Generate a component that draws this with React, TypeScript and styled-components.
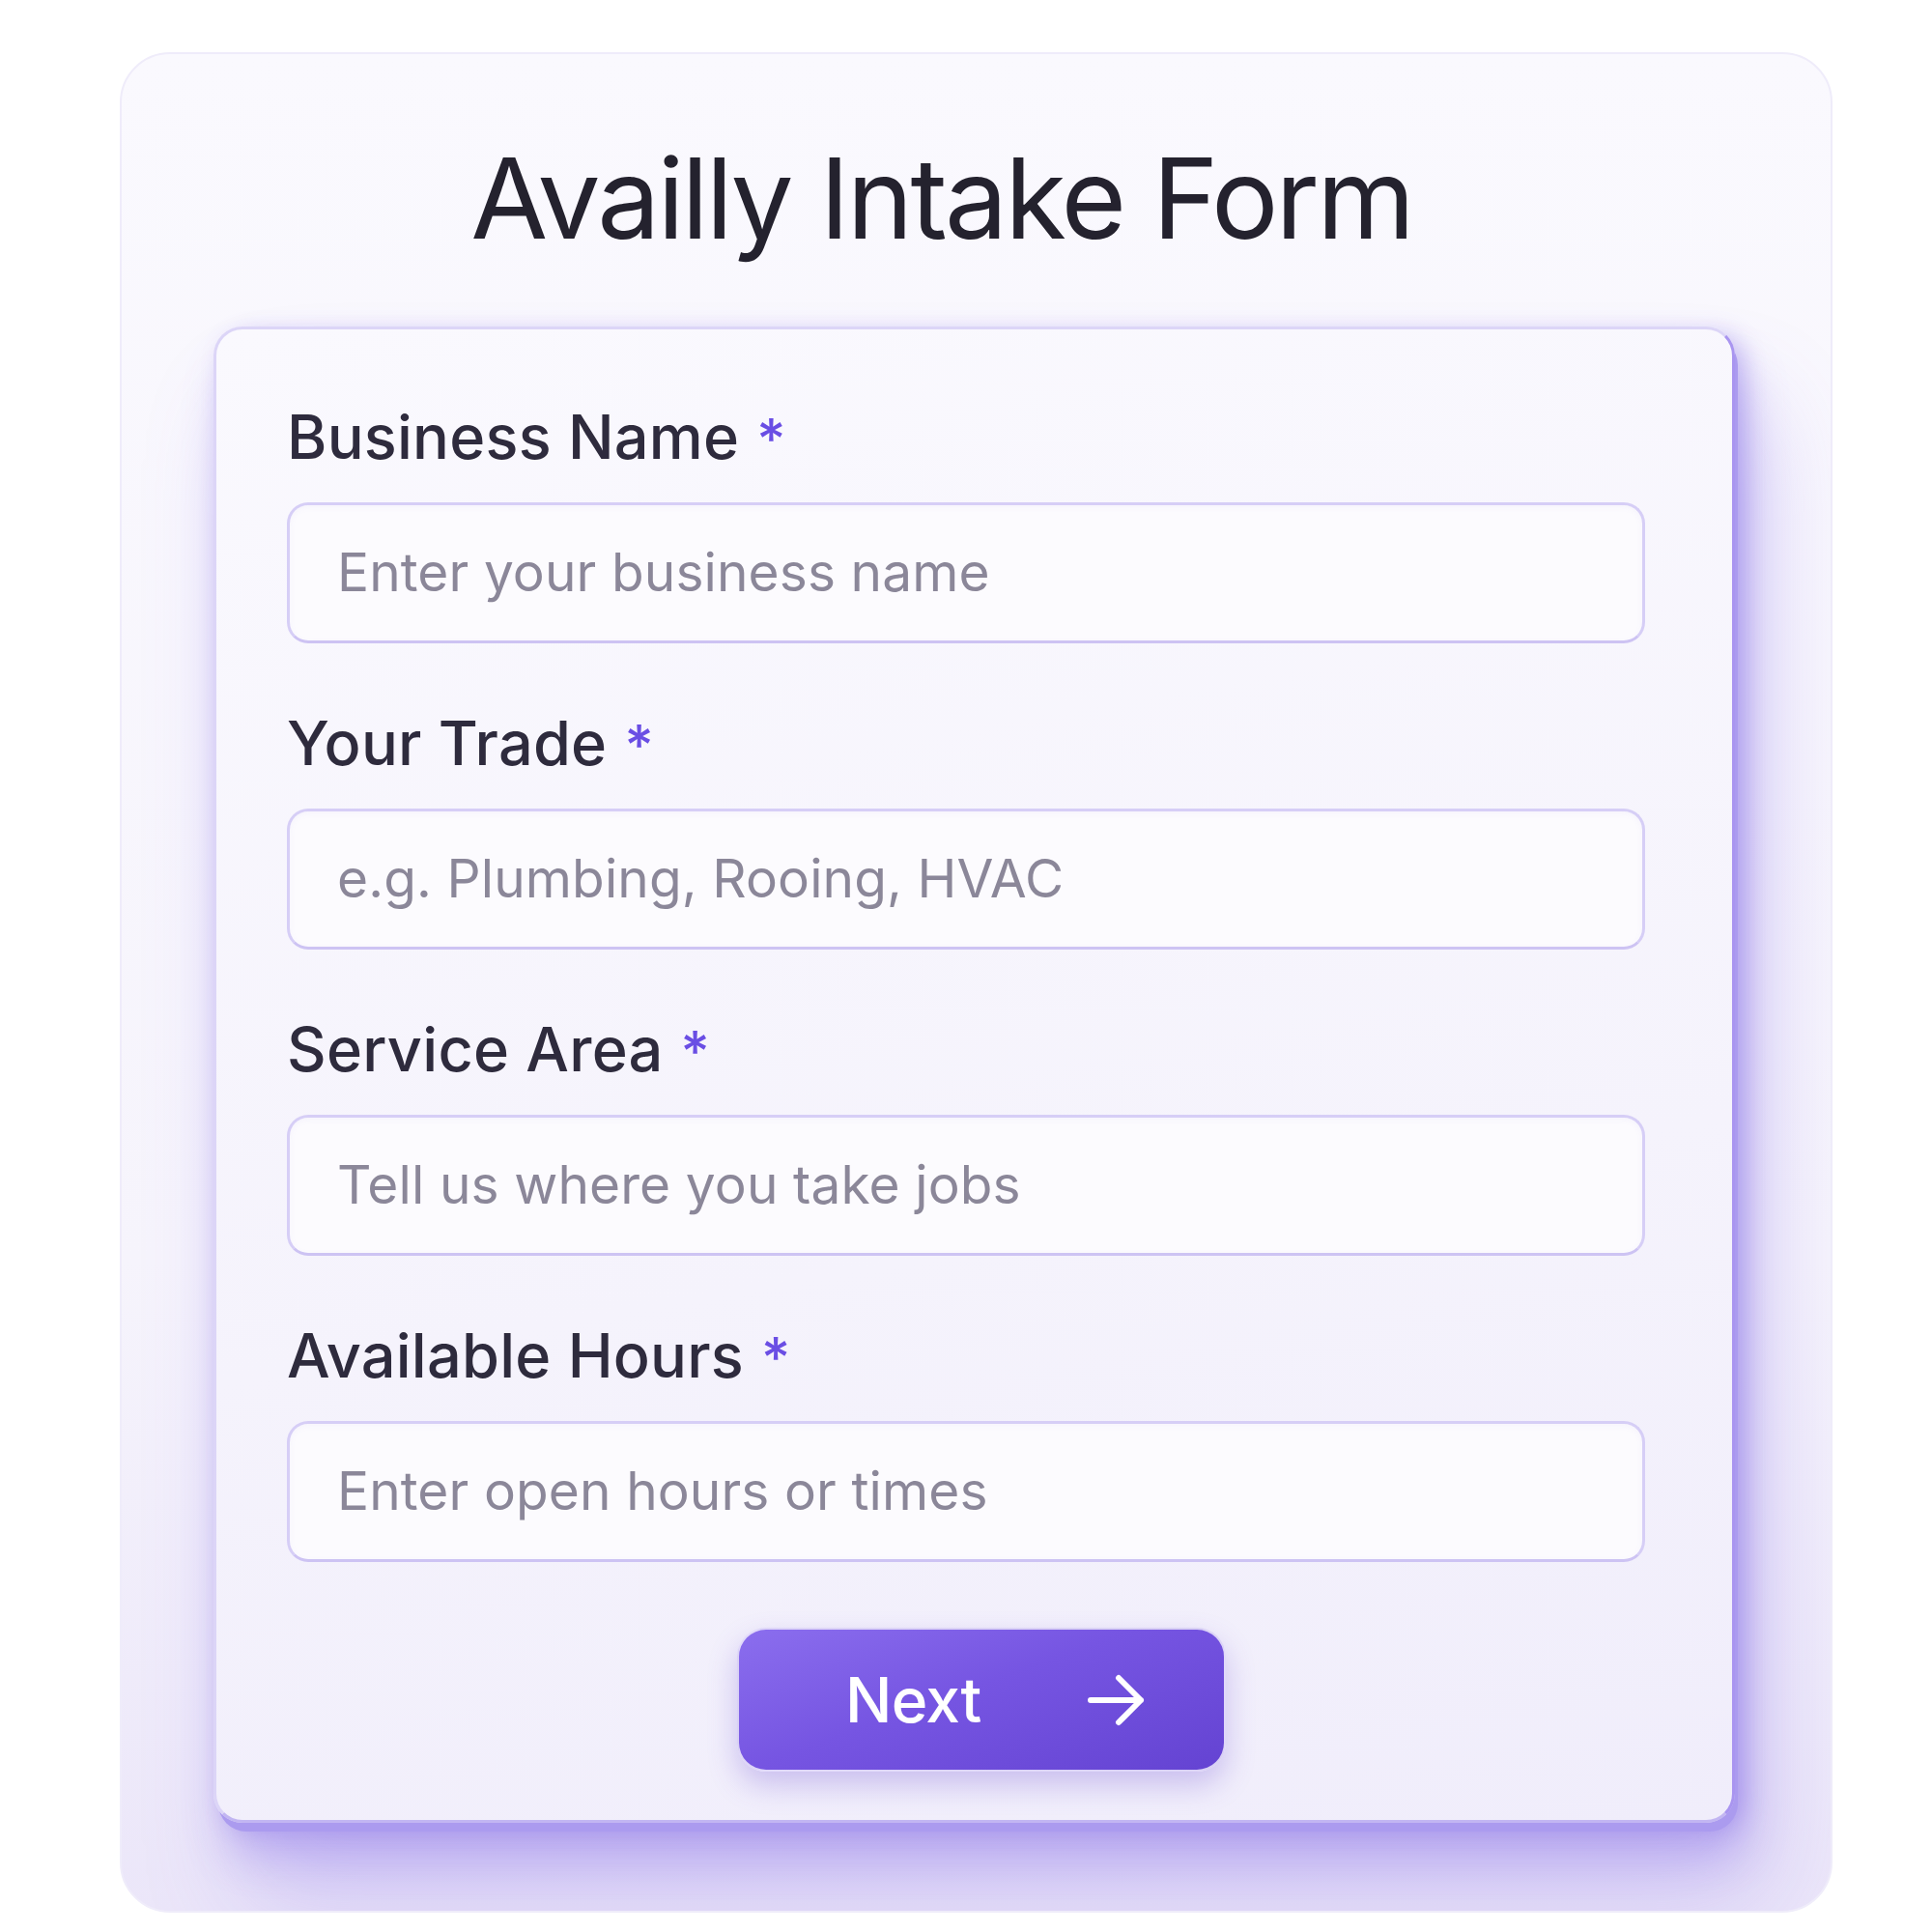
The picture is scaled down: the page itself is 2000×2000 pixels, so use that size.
import React from 'react';
import styled, { createGlobalStyle } from 'styled-components';

const GlobalStyle = createGlobalStyle`
  html,
  body {
    margin: 0;
    padding: 0;
    background: #ffffff;
  }

  body {
    font-family: Inter, 'Noto Sans', 'Liberation Sans', sans-serif;
    -webkit-font-smoothing: antialiased;
  }

  * {
    box-sizing: border-box;
  }
`;

const Page = styled.div`
  width: 2000px;
  height: 2000px;
  display: flex;
  align-items: flex-start;
  padding: 54px 0 0 124px;
`;

const OuterCard = styled.section`
  width: 1773px;
  height: 1926px;
  display: flex;
  flex-direction: column;
  padding: 91px 99px 0 95px;
  border: 2px solid #efecfa;
  border-radius: 52px;
  background: linear-gradient(180deg, #faf9fe 0%, #f6f4fc 65%, #ebe6f9 100%);
  overflow: hidden;
`;

const Title = styled.h1`
  margin: 0;
  padding-right: 68px;
  font-size: 116px;
  line-height: 116px;
  font-weight: 400;
  letter-spacing: -0.025em;
  color: #24222e;
  text-align: center;
`;

const FormCard = styled.form`
  margin-top: 75px;
  display: flex;
  flex-direction: column;
  padding: 80px 90px 50px 73px;
  border: 3px solid #dcd5f7;
  border-right-color: #a995f0;
  border-bottom-color: #c2b6f2;
  border-radius: 30px;
  background: linear-gradient(170deg, #faf9fe 0%, #f5f3fc 60%, #f0edfb 100%);
  box-shadow:
    4px 10px 0 -1px #ab9bef,
    10px 6px 22px rgba(124, 96, 230, 0.3),
    12px 34px 44px rgba(124, 96, 230, 0.3),
    30px 80px 100px rgba(124, 96, 230, 0.26);
`;

const Field = styled.div<{ $last?: boolean }>`
  display: flex;
  flex-direction: column;
  gap: 37px;
  margin-bottom: ${({ $last }) => ($last ? '68px' : '72px')};
`;

const Label = styled.label`
  display: block;
  height: 62px;
  font-size: 63px;
  line-height: 62px;
  font-weight: 500;
  letter-spacing: 0.004em;
  color: #2e2b3d;
  white-space: nowrap;
`;

const Required = styled.span`
  margin-left: 18px;
  color: #6a4ee4;
  font-weight: 500;
  font-size: 58px;
  line-height: 0;
`;

const TextInput = styled.input`
  display: block;
  width: 100%;
  height: 146px;
  margin: 0;
  padding: 0 40px 2px 49px;
  border: 3px solid #d6cef6;
  border-bottom-color: #cdc3f3;
  border-radius: 22px;
  background: #fcfbfe;
  box-shadow: inset 0 2px 6px rgba(140, 120, 220, 0.06);
  font-family: Inter, 'Noto Sans', 'Liberation Sans', sans-serif;
  font-size: 55px;
  font-weight: 400;
  letter-spacing: 0.002em;
  color: #2e2b3d;
  outline: none;

  &::placeholder {
    color: #8b8799;
    opacity: 1;
  }
`;

const NextButton = styled.button`
  align-self: center;
  margin-left: 32px;
  width: 506px;
  height: 149px;
  display: flex;
  align-items: center;
  justify-content: space-between;
  padding: 0 82px 0 110px;
  border: 2px solid rgba(255, 255, 255, 0.75);
  border-radius: 30px;
  background: linear-gradient(160deg, #8b6eee 0%, #7655e2 45%, #6443d2 100%);
  box-shadow: 0 14px 30px rgba(100, 70, 210, 0.28);
  color: #ffffff;
  font-family: Inter, 'Noto Sans', 'Liberation Sans', sans-serif;
  font-size: 64px;
  font-weight: 500;
  letter-spacing: -0.01em;
  cursor: pointer;
`;

const ArrowIcon = () => (
  <svg width="60" height="54" viewBox="0 0 60 54" fill="none">
    <path
      d="M4 27H56M33 4L56 27L33 50"
      stroke="#ffffff"
      strokeWidth="6"
      strokeLinecap="round"
      strokeLinejoin="round"
    />
  </svg>
);

const fields = [
  { id: 'business', label: 'Business Name', placeholder: 'Enter your business name' },
  { id: 'trade', label: 'Your Trade', placeholder: 'e.g. Plumbing, Rooing, HVAC' },
  { id: 'area', label: 'Service Area', placeholder: 'Tell us where you take jobs' },
  { id: 'hours', label: 'Available Hours', placeholder: 'Enter open hours or times' },
];

export default function App() {
  return (
    <>
      <GlobalStyle />
      <Page>
        <OuterCard>
          <Title>Availly Intake Form</Title>
          <FormCard onSubmit={(e) => e.preventDefault()}>
            {fields.map((field, i) => (
              <Field key={field.id} $last={i === fields.length - 1}>
                <Label htmlFor={field.id}>
                  {field.label}
                  <Required>*</Required>
                </Label>
                <TextInput id={field.id} placeholder={field.placeholder} />
              </Field>
            ))}
            <NextButton type="submit">
              Next
              <ArrowIcon />
            </NextButton>
          </FormCard>
        </OuterCard>
      </Page>
    </>
  );
}
